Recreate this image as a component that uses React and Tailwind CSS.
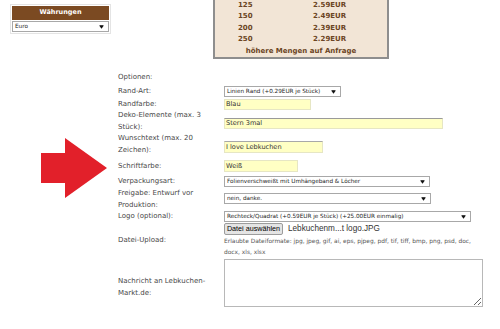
import React from "react";

const Arrow = () => (
  <svg width="5" height="4" viewBox="0 0 5 4" className="shrink-0">
    <rect x="0.5" y="0" width="4" height="0.8" fill="#111" />
    <polygon points="0.5,1 4.5,1 2.5,3.8" fill="#111" />
  </svg>
);

const FakeSelect = ({ className, text }) => (
  <div
    className={`${className} bg-white border border-[#a8a8a8] flex items-center justify-between pl-[2px] pr-[4px] text-[5.7px] leading-none text-[#222] whitespace-nowrap overflow-hidden`}
  >
    <span>{text}</span>
    <Arrow />
  </div>
);

const YellowInput = ({ className, text }) => (
  <div
    className={`${className} bg-[#ffffc4] border border-[#e6e6c4] flex items-center pl-[1px] text-[6.6px] leading-none text-[#333] whitespace-nowrap`}
  >
    {text}
  </div>
);

const priceRows = [
  ["125", "2.59EUR"],
  ["150", "2.49EUR"],
  ["200", "2.39EUR"],
  ["250", "2.29EUR"],
];

const App = () => {
  return (
    <div className="w-[500px] h-[329px] bg-white overflow-hidden flex font-['DejaVu_Sans',sans-serif] text-[#484848]">
      {/* left column */}
      <div className="w-[118px] shrink-0 flex flex-col">
        <div className="mt-[4px] ml-[10px] w-[101px] border border-[#e4e4e4] p-[1px]">
          <div className="h-[14px] bg-[#7b4a22] text-white font-bold text-[6.5px] flex items-center justify-center">
            Währungen
          </div>
          <FakeSelect className="mt-[1px] h-[11px] w-full" text="Euro" />
        </div>
        <svg width="118" height="62" viewBox="0 0 118 62" className="mt-[103px]">
          <polygon
            points="41,16 65,16 65,1 107,31 65,61 65,46 41,46"
            fill="#e2202a"
          />
        </svg>
      </div>

      {/* main column */}
      <div className="flex-1 flex flex-col">
        <div className="h-[71px] shrink-0">
          <div className="mt-[-1px] ml-[95px] w-[176px] bg-[#f2e5d6] border-x-2 border-b-2 border-[#8e8e8e] text-[#6b4423] font-bold text-[7px]">
            {priceRows.map(([qty, price]) => (
              <div key={qty} className="flex h-[11.5px] items-center">
                <span className="w-[98px] pl-[23px]">{qty}</span>
                <span>{price}</span>
              </div>
            ))}
            <div className="h-[11.5px] flex items-center justify-center">
              höhere Mengen auf Anfrage
            </div>
          </div>
        </div>

        <div className="flex flex-col text-[7px] leading-[12px]">
          <div className="flex h-[14px]">
            <div className="w-[106px]">Optionen:</div>
          </div>

          <div className="flex h-[13px]">
            <div className="w-[106px]">Rand-Art:</div>
            <FakeSelect
              className="mt-[1px] w-[117px] h-[11px]"
              text="Linien Rand (+0.29EUR je Stück)"
            />
          </div>

          <div className="flex h-[10px]">
            <div className="w-[106px]">Randfarbe:</div>
            <YellowInput className="mt-[1px] w-[87px] h-[11px]" text="Blau" />
          </div>

          <div className="flex h-[24px]">
            <div className="w-[106px] pt-[1px]">
              Deko-Elemente (max. 3
              <br />
              Stück):
            </div>
            <YellowInput
              className="mt-[10px] w-[219px] h-[11px] border-t-[#9a9a9a]"
              text="Stern 3mal"
            />
          </div>

          <div className="flex h-[28px]">
            <div className="w-[106px]">
              Wunschtext (max. 20
              <br />
              Zeichen):
            </div>
            <YellowInput
              className="mt-[9px] w-[99px] h-[12px] border-t-[#a8a8a8]"
              text="I love Lebkuchen"
            />
          </div>

          <div className="flex h-[15px]">
            <div className="w-[106px]">Schriftfarbe:</div>
            <YellowInput className="w-[74px] h-[12px]" text="Weiß" />
          </div>

          <div className="flex h-[12px]">
            <div className="w-[106px]">Verpackungsart:</div>
            <FakeSelect
              className="mt-[1px] w-[206px] h-[11px]"
              text="Folienverschweißt mit Umhängeband & Löcher"
            />
          </div>

          <div className="flex h-[23px]">
            <div className="w-[106px]">
              Freigabe: Entwurf vor
              <br />
              Produktion:
            </div>
            <FakeSelect
              className="mt-[6px] w-[207px] h-[11px]"
              text="nein, danke."
            />
          </div>

          <div className="flex h-[13px]">
            <div className="w-[106px]">Logo (optional):</div>
            <FakeSelect
              className="mt-[1px] w-[247px] h-[11px]"
              text="Rechteck/Quadrat (+0.59EUR je Stück) (+25.00EUR einmalig)"
            />
          </div>

          <div className="flex h-[11px]">
            <div className="w-[106px]"></div>
            <div className="mt-[1px] flex items-center font-['Liberation_Sans',sans-serif] text-[#222]">
              <button className="h-[12px] w-[59px] bg-[#e4e4e4] border border-[#9c9c9c] rounded-[2px] text-[7.2px] leading-none text-black">
                Datei auswählen
              </button>
              <span className="ml-[5px] text-[8.2px] leading-none text-[#333]">
                Lebkuchenm...t logo.JPG
              </span>
            </div>
          </div>

          <div className="flex h-[25px]">
            <div className="w-[106px]">Datei-Upload:</div>
            <div className="mt-[2px] text-[5.9px] leading-[11px] text-[#555] whitespace-nowrap">
              Erlaubte Dateiformate: jpg, jpeg, gif, ai, eps, pjpeg, pdf, tif,
              tiff, bmp, png, psd, doc,
              <br />
              docx, xls, xlsx
            </div>
          </div>

          <div className="flex h-[48px]">
            <div className="w-[106px] mt-[16px]">
              Nachricht an Lebkuchen-
              <br />
              Markt.de:
            </div>
            <textarea className="w-[259px] h-[48px] border border-[#b8b8b8] bg-white outline-none" />
          </div>
        </div>
      </div>
    </div>
  );
};

export default App;
